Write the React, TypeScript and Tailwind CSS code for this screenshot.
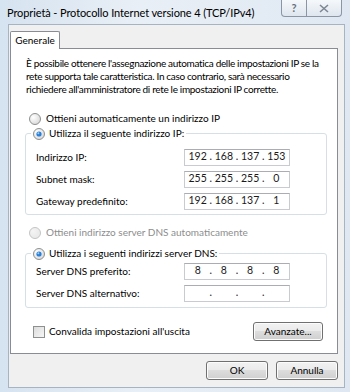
import React from 'react';

const font = { fontFamily: 'Lato, "Liberation Sans", sans-serif' };

function Radio({ checked, disabled }: { checked?: boolean; disabled?: boolean }) {
  const id = checked ? 'rg1' : disabled ? 'rg3' : 'rg2';
  return (
    <svg width="12" height="12" viewBox="0 0 12 12" className="shrink-0">
      <defs>
        <radialGradient id={id} cx="0.35" cy="0.35" r="0.8">
          <stop offset="0" stopColor={disabled ? '#f4f4f4' : '#ffffff'} />
          <stop offset="1" stopColor={disabled ? '#e6e6e6' : '#d4d4d4'} />
        </radialGradient>
      </defs>
      <circle cx="6" cy="6" r="5.5" fill={`url(#${id})`} stroke={disabled ? '#c4c4c4' : '#8e8f8f'} />
      {checked && <circle cx="6" cy="6" r="2.6" fill="#2a7fd6" />}
      {checked && <circle cx="5.4" cy="5.3" r="1" fill="#9fd1ff" />}
    </svg>
  );
}

function IpBox({ parts }: { parts: string[] }) {
  return (
    <div className="w-[106px] h-[17px] bg-white border border-[#c9cbd0] border-t-[#abadb3] flex items-center px-[2px] text-[#1a1a1a] text-[10.5px]">
      {parts.map((p, i) => (
        <React.Fragment key={i}>
          <span className="w-[22px] text-center">{p}</span>
          {i < 3 && <span className="w-[5px] text-center">.</span>}
        </React.Fragment>
      ))}
    </div>
  );
}

function Row({ label, parts }: { label: string; parts: string[] }) {
  return (
    <div className="flex items-center justify-between h-[22px] pl-[10px] pr-[36px]">
      <span>{label}</span>
      <IpBox parts={parts} />
    </div>
  );
}

function WinButton({ children, className = '' }: { children: React.ReactNode; className?: string }) {
  return (
    <div
      className={`h-[19px] rounded-[3px] border border-[#707070] flex items-center justify-center text-black bg-[linear-gradient(#f2f2f2_0%,#ebebeb_45%,#dddddd_50%,#cfcfcf_100%)] shadow-[inset_0_0_0_1px_#fcfcfc] ${className}`}
    >
      {children}
    </div>
  );
}

function GroupBox({ legend, children, className = '' }: { legend: React.ReactNode; children: React.ReactNode; className?: string }) {
  return (
    <div className={`relative border border-[#d5dfe5] rounded-[3px] ${className}`}>
      <div className="absolute -top-[8px] left-[5px] bg-white px-[2px] flex items-center gap-[4px] h-[15px] whitespace-nowrap">
        {legend}
      </div>
      {children}
    </div>
  );
}

export default function App() {
  return (
    <div
      className="w-[350px] h-[392px] overflow-hidden flex flex-col bg-[linear-gradient(90deg,#d6e3f0_0%,#e9eff6_40%,#dfe8f2_100%)] text-[10px] text-black"
      style={font}
    >
      {/* Title bar */}
      <div className="h-[24px] flex items-start justify-between shrink-0">
        <span className="pl-[7px] pt-[5px] text-[11px] tracking-[-0.1px] text-black whitespace-nowrap">
          Proprietà - Protocollo Internet versione 4 (TCP/IPv4)
        </span>
        <div className="flex mr-[8px]">
          <div className="w-[26px] h-[17px] border border-[#8a96a6] border-t-0 rounded-bl-[4px] bg-[linear-gradient(#f5f8fb,#dfe6ee)] flex items-center justify-center text-[#66707c] text-[11px] font-bold">
            ?
          </div>
          <div className="w-[35px] h-[17px] border border-[#8a96a6] border-t-0 border-l-0 rounded-br-[4px] bg-[linear-gradient(#f5f8fb,#dfe6ee)] flex items-center justify-center">
            <svg width="10" height="9" viewBox="0 0 10 9">
              <path d="M1 1 L9 8 M9 1 L1 8" stroke="#7d8793" strokeWidth="1.6" fill="none" />
            </svg>
          </div>
        </div>
      </div>

      {/* Client area */}
      <div className="ml-[8px] w-[337px] h-[364px] bg-[#f0f0f0] border border-[#a5b3c2] flex flex-col pl-[1px]">
        {/* Tab strip */}
        <div className="mt-[6px] h-[18px] flex relative z-10">
          <div className="w-[50px] h-[18px] bg-white border border-[#898c95] border-b-0 rounded-t-[2px] flex items-center justify-center">
            Generale
          </div>
        </div>
        {/* Tab panel */}
        <div className="-mt-[1px] w-[328px] h-[306px] bg-white border border-[#898c95] flex flex-col pl-[14px] pr-[10px]">
          <p className="mt-[8px] pl-[1px] leading-[13px] whitespace-nowrap text-[10px] tracking-[-0.33px]">
            È possibile ottenere l'assegnazione automatica delle impostazioni IP se la
            <br />
            rete supporta tale caratteristica. In caso contrario, sarà necessario
            <br />
            richiedere all'amministratore di rete le impostazioni IP corrette.
          </p>

          <div className="mt-[15px] ml-[4px] flex items-center gap-[5px] h-[15px]">
            <Radio />
            <span>Ottieni automaticamente un indirizzo IP</span>
          </div>

          <GroupBox
            className="mt-[7px] h-[82px] pt-[12px]"
            legend={
              <>
                <Radio checked />
                <span>Utilizza il seguente indirizzo IP:</span>
              </>
            }
          >
            <Row label="Indirizzo IP:" parts={['192', '168', '137', '153']} />
            <Row label="Subnet mask:" parts={['255', '255', '255', '0']} />
            <Row label="Gateway predefinito:" parts={['192', '168', '137', '1']} />
          </GroupBox>

          <div className="mt-[10px] ml-[4px] flex items-center gap-[5px] h-[15px] text-[#8d8d8d]">
            <Radio disabled />
            <span>Ottieni indirizzo server DNS automaticamente</span>
          </div>

          <GroupBox
            className="mt-[13px] h-[55px] pt-[6px]"
            legend={
              <>
                <Radio checked />
                <span>Utilizza i seguenti indirizzi server DNS:</span>
              </>
            }
          >
            <Row label="Server DNS preferito:" parts={['8', '8', '8', '8']} />
            <Row label="Server DNS alternativo:" parts={['', '', '', '']} />
          </GroupBox>

          <div className="mt-[14px] flex items-center justify-between pl-[8px] pr-[4px]">
            <div className="flex items-center gap-[4px]">
              <div className="w-[12px] h-[12px] border border-[#8e8f8f] bg-[linear-gradient(135deg,#dcdcdc,#f6f6f6)]" />
              <span>Convalida impostazioni all'uscita</span>
            </div>
            <WinButton className="w-[70px]">Avanzate...</WinButton>
          </div>
        </div>

        {/* Bottom buttons */}
        <div className="mt-[7px] flex justify-end gap-[8px] pr-[6px]">
          <WinButton className="w-[62px]">OK</WinButton>
          <WinButton className="w-[62px]">Annulla</WinButton>
        </div>
      </div>
    </div>
  );
}
